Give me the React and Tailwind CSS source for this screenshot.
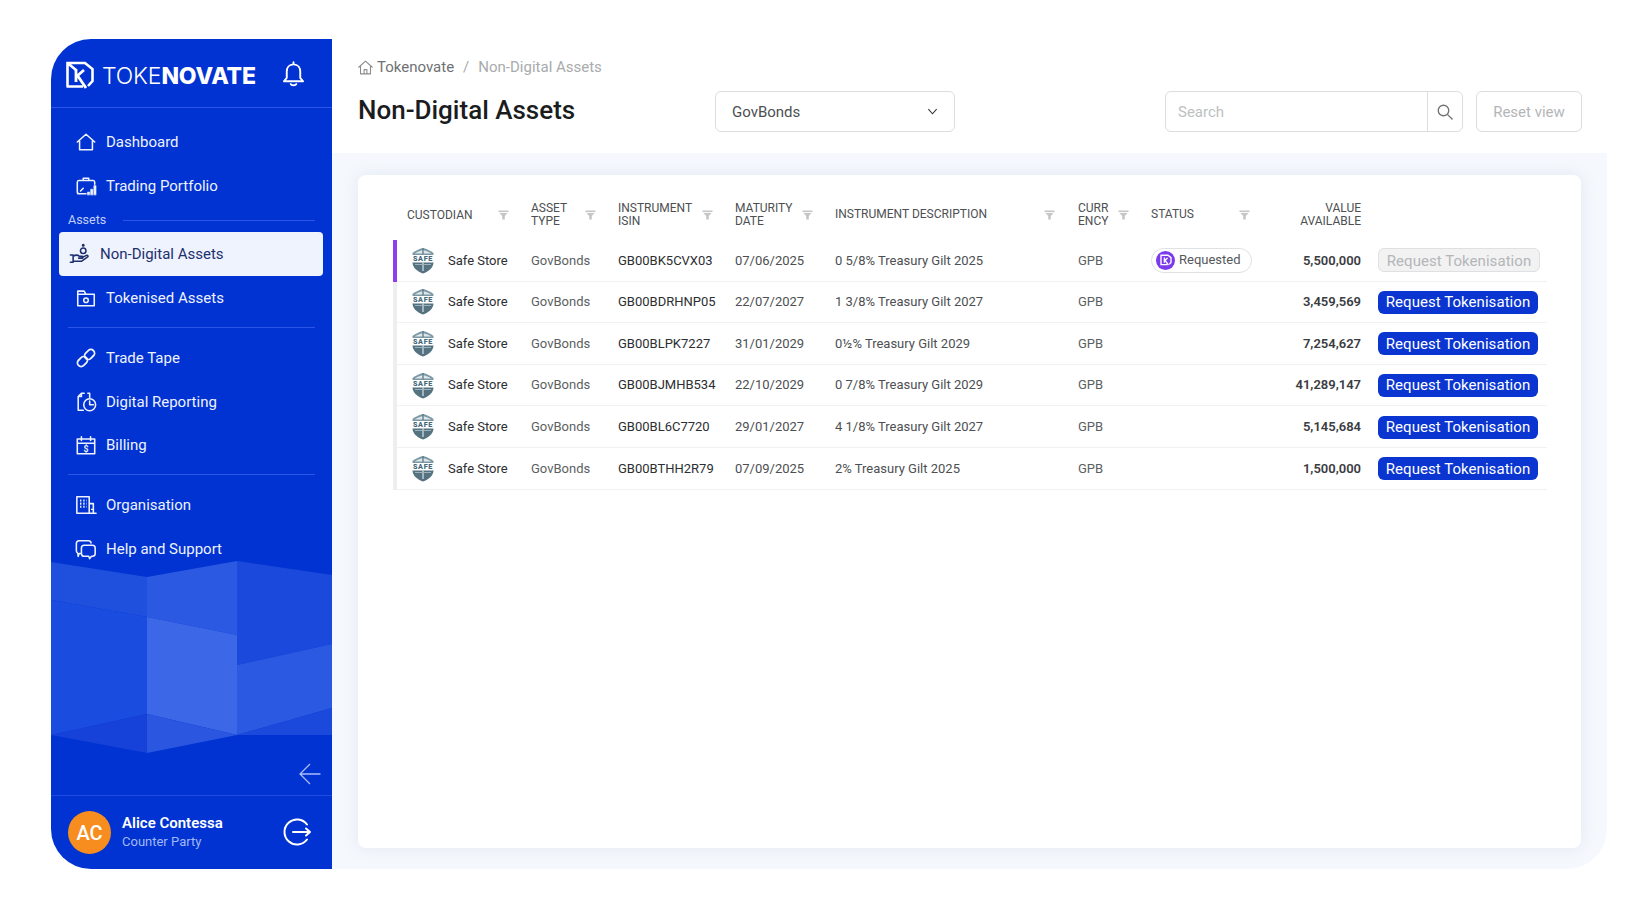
import React from "react";

const F = "font-['Roboto',sans-serif]";

function Ic({ children, className = "w-[22px] h-[22px] shrink-0", vb = "0 0 24 24", sw = 1.7 }) {
  return (
    <svg viewBox={vb} className={className} fill="none" stroke="currentColor" strokeWidth={sw} strokeLinecap="round" strokeLinejoin="round">
      {children}
    </svg>
  );
}

const icons = {
  home: <Ic><path d="M2.500 12 12 3.500l9.500 8.500M5 10.500V20.500h14V10.500" /></Ic>,
  portfolio: <Ic><path d="M9 6V3.500h6V6M5 20.500c-2 0-2.500-.5-2.500-2V8C2.500 7 3 6 4 6h16c1 0 1.500 1 1.500 2v2M3 20.500h9" /><path d="M13.500 21.500v-3h2.500v3zM17 21.500v-6h2.500v6zM20.500 21.500V11.500H23v10z" fill="currentColor" strokeWidth="0.5" /><path d="M6 17.500l3-3" /></Ic>,
  hand: <Ic><path d="M1.500 13h3v8h-3M4.500 14.500c3-2 5-1.500 7 0h3c1 0 1 2 0 2h-4M14 16l5-2.500c1.500-.5 2.500 1 1 2L13.500 20H4.500" /><circle cx="15.500" cy="8.500" r="3" /><circle cx="15.500" cy="2.500" r=".8" fill="currentColor" /></Ic>,
  folder: <Ic><path d="M3 20.500V4.500h7l2 3.500h9v12.500zM3 8h9" /><circle cx="12" cy="14.500" r="2.500" /></Ic>,
  link: <Ic sw={2}><g transform="rotate(-45 12 12)"><rect x="0.500" y="8" width="12" height="8" rx="4" /><rect x="11.500" y="8" width="12" height="8" rx="4" /></g></Ic>,
  report: <Ic><path d="M10 2.500H7L3.500 6v15H9M3.500 6H7V2.500M14 2.500h2V7" /><circle cx="16" cy="15" r="6.500" /><path d="M16 11v4h4" /></Ic>,
  billing: <Ic><path d="M2.500 5.500h19v16h-19zM2.500 10h19M7 3v4M17 3v4" /><text x="12" y="19.700" fontSize="9.500" textAnchor="middle" fill="currentColor" stroke="none" fontWeight="700" fontFamily="Roboto">$</text></Ic>,
  org: <Ic><path d="M2 21V3h13.500v18zM15.500 10.500H20V21h-4.500M2 21h21" /><path d="M5.500 7h1.500M9 7h1.500M12.500 7h.5M5.500 10.500h1.500M9 10.500h1.500M12.500 10.500h.5M5.500 14h1.500M9 14h1.500M12.500 14h.5M18.500 16v1.500" strokeWidth="2.200" strokeLinecap="butt" /></Ic>,
  help: <Ic><path d="M6 17H4.500l-1 3-.5-3.500C2 16 1.500 15 1.500 14V6c0-2 1-3 3-3h10c2 0 3 1 3 2.500" /><path d="M10 8h9c2 0 3 1 3 3v6c0 2-1 3-3 3h-1l-2 2.500-1-2.500h-5c-2 0-3-1-3-3v-6c0-2 1-3 3-3z" /></Ic>,
};

const Divider = ({ className }) => <div className={`h-px bg-[#2a55e6] ml-[17px] mr-[17px] ${className}`} />;

function NavItem({ icon, label }) {
  return (
    <div className="h-[44px] flex items-center pl-[25px] text-[#eef2ff] text-[15px]">
      <span className="w-[20px] h-[20px] mr-[10px] flex items-center justify-center">{icons[icon]}</span>
      <span>{label}</span>
    </div>
  );
}

function Sidebar() {
  return (
    <aside className="relative w-[281px] h-full bg-[#0033d1] rounded-l-[40px] flex flex-col overflow-hidden shrink-0">
      <svg className="absolute left-0 top-[522px] w-[281px] h-[192px]" viewBox="51 561 281 192" aria-hidden="true">
        <polygon points="51,562 147,577 147,617 51,600" fill="#1e4fdd" />
        <polygon points="51,600 147,617 147,714 51,735" fill="#1a4ddf" />
        <polygon points="51,735 147,714 147,753" fill="#1642d9" />
        <polygon points="147,577 237,561 237,635 147,617" fill="#2c59e1" />
        <polygon points="147,617 237,635 237,735 147,714" fill="#3c67e6" />
        <polygon points="147,714 237,735 147,753" fill="#2a56e0" />
        <polygon points="237,561 332,575 332,644 237,665" fill="#1a49db" />
        <polygon points="237,665 332,644 332,708 237,735" fill="#2c59e2" />
        <polygon points="237,735 332,708 332,735" fill="#1b49dc" />
      </svg>
      <div className="relative h-[69px] shrink-0 border-b border-[#2a55e6] flex items-center pl-[14px]">
        <svg viewBox="0 0 30 28" className="w-[30px] h-[28px] mt-[4px]" fill="none" stroke="white" strokeWidth="2.600">
          <path d="M2.500 1V25.500M1.500 25.500H18M1.500 2H20L27.500 8V20L23 25M2.500 2 11 9" />
          <path d="M11 8V21M11 16 19 9M12.500 14.500 21 27" strokeWidth="2.800" />
        </svg>
        <span className="ml-[7px] mt-[6px] text-[23px] leading-none tracking-[-0.15px] text-white font-['Inter',sans-serif] font-light">TOKE<span className="font-extrabold">NOVATE</span></span>
        <svg viewBox="0 0 24 24" className="absolute left-[229px] top-[21px] w-[27px] h-[29px] text-white" fill="none" stroke="currentColor" strokeWidth="1.700" strokeLinejoin="round" strokeLinecap="round">
          <path d="M12 3c-4 0-6 3-6 6.500V15l-2.500 3h17L18 15V9.500C18 6 16 3 12 3zM12 1v2M9.500 20.500c.5 1.500 4.500 1.500 5 0" />
        </svg>
      </div>
      <nav className="relative flex flex-col mt-[12px]">
        <NavItem icon="home" label="Dashboard" />
        <NavItem icon="portfolio" label="Trading Portfolio" />
        <div className="mt-[5px] h-[14px] flex items-center pl-[17px] text-[#c3d0fb] text-[12.500px]">
          <span className="mr-[17px]">Assets</span>
          <span className="flex-1 h-px bg-[#2a55e6] mr-[17px]" />
        </div>
        <div className="mt-[5px] ml-[8px] mr-[9px] h-[44px] rounded-[4px] bg-[#eef3fd] flex items-center pl-[11px] text-[#1d2f6f] text-[15px]">
          <span className="w-[20px] h-[20px] mr-[10px] flex items-center justify-center">{icons.hand}</span>
          <span>Non-Digital Assets</span>
        </div>
        <NavItem icon="folder" label="Tokenised Assets" />
        <Divider className="mt-[7px] mb-[8px]" />
        <NavItem icon="link" label="Trade Tape" />
        <NavItem icon="report" label="Digital Reporting" />
        <div className="-mt-px"><NavItem icon="billing" label="Billing" /></div>
        <Divider className="mt-[7px] mb-[8px]" />
        <NavItem icon="org" label="Organisation" />
        <NavItem icon="help" label="Help and Support" />
      </nav>
      <div className="relative mt-auto flex justify-end pr-[10px] pb-[9px] text-[#a9bcf7]">
        <svg viewBox="0 0 24 24" className="w-[24px] h-[24px]" fill="none" stroke="currentColor" strokeWidth="1.300"><path d="M22.500 12H2M12 2 2 12l10 10" /></svg>
      </div>
      <div className="relative h-[74px] border-t border-[#1f4be0] flex items-center pl-[17px] pr-[20px]">
        <div className="w-[43px] h-[43px] rounded-full bg-[#f78c1f] text-white text-[20px] flex items-center justify-center font-medium">AC</div>
        <div className="ml-[11px] -mt-[2px] flex flex-col">
          <span className="text-white text-[15px] leading-[19px] font-semibold">Alice Contessa</span>
          <span className="text-[#a3b8f5] text-[13px] leading-[17px]">Counter Party</span>
        </div>
        <svg viewBox="0 0 30 30" className="ml-auto -mt-[2px] w-[30px] h-[30px] text-white" fill="none" stroke="currentColor" strokeWidth="2" strokeLinecap="round" strokeLinejoin="round">
          <path d="M25 7.500A12.500 12.500 0 1 0 25 22.500M11 15h17M24 11.500l4 3.500-4 3.500" />
        </svg>
      </div>
    </aside>
  );
}

function Funnel() {
  return (
    <svg viewBox="0 0 10 10" className="w-[11px] h-[10px] shrink-0" fill="#c4c6c8">
      <rect x="0" y="0.500" width="10" height="1.600" />
      <polygon points="1,3 9,3 6.300,6 6.300,9.500 3.700,9.500 3.700,6" />
    </svg>
  );
}

function Shield() {
  return (
    <svg viewBox="0 0 24 27" className="w-[24px] h-[27px]">
      <path d="M1.500 6C5 3.500 8 2 12 1c4 1 7 2.500 10.500 5v2h-21z" fill="#7c98a4" />
      <path d="M3.500 6.500C6 5 9 3.800 12 3c3 .8 6 2 8.500 3.500z" fill="#dfe7ea" />
      <path d="M11.300 1h1.400v6h-1.400z" fill="#5f7f8c" />
      <path d="M1.500 15.500h21c0 5-5 9-10.500 11C6.500 24.500 1.500 20.500 1.500 15.500z" fill="#54727f" />
      <path d="M4 17h7v1H4zM13 17h7v1h-7z" fill="#9db3bc" />
      <path d="M11.300 15h1.400v9h-1.400z" fill="#c6d3d8" />
      <text x="12" y="13.700" textAnchor="middle" fontSize="7.200" fontWeight="900" letterSpacing=".7" fontFamily="Roboto" fill="#46697a">SAFE</text>
    </svg>
  );
}

const COLS = "grid grid-cols-[134px_87px_117px_100px_243px_73px_115px_95px_186px] w-[1150px]";

function Head({ children, width, right }) {
  return (
    <div className={`h-[37px] flex items-center ${right ? "justify-end text-right" : ""}`}>
      <div className={`leading-[13px] text-[12px] text-[#4d4f52] uppercase ${width}`}>{children}</div>
      {!right && <Funnel />}
    </div>
  );
}

const rows = [
  ["GB00BK5CVX03", "07/06/2025", "0 5/8% Treasury Gilt 2025", "5,500,000"],
  ["GB00BDRHNP05", "22/07/2027", "1 3/8% Treasury Gilt 2027", "3,459,569"],
  ["GB00BLPK7227", "31/01/2029", "0½% Treasury Gilt 2029", "7,254,627"],
  ["GB00BJMHB534", "22/10/2029", "0 7/8% Treasury Gilt 2029", "41,289,147"],
  ["GB00BL6C7720", "29/01/2027", "4 1/8% Treasury Gilt 2027", "5,145,684"],
  ["GB00BTHH2R79", "07/09/2025", "2% Treasury Gilt 2025", "1,500,000"],
];

function Row({ r, i }) {
  const first = i === 0;
  return (
    <div className={`${COLS} h-[41.600px] items-center border-b border-[#f0f1f2] relative text-[13px]`}>
      <div className={`absolute left-[-4px] top-0 bottom-[-1px] w-[4px] ${first ? "bg-[#8b3ff0]" : "bg-[#eeeeee]"}`} />
      <div className="flex items-center pl-[14px]">
        <Shield />
        <span className="ml-[13px] text-[#2c2e31]">Safe Store</span>
      </div>
      <div className="text-[#5c5f62]">GovBonds</div>
      <div className="text-[#2c2e31]">{r[0]}</div>
      <div className="text-[#4d4f52]">{r[1]}</div>
      <div className="text-[#4d4f52]">{r[2]}</div>
      <div className="text-[#5c5f62]">GPB</div>
      <div>
        {first && (
          <div className="w-[101px] h-[25px] rounded-full border border-[#e0e1e3] flex items-center pl-[4px] text-[#55585b]">
            <span className="w-[19px] h-[19px] rounded-full bg-[#7c3aed] flex items-center justify-center">
              <svg viewBox="0 0 30 28" className="w-[12px] h-[12px]" fill="none" stroke="white" strokeWidth="3.400">
                <path d="M2.500 1V25.500H18M1.500 2H20L27.500 8V20L23 25" />
                <path d="M11 8V21M11 16 19 9M12.500 14.500 21 27" />
              </svg>
            </span>
            <span className="ml-[4px] -mt-px">Requested</span>
          </div>
        )}
      </div>
      <div className="text-right font-semibold text-[#3a3c3f]">{r[3]}</div>
      <div className="pl-[17px]">
        {first ? (
          <div className="w-[162px] h-[24px] pt-[2px] rounded-[6px] border border-[#dfe0e1] bg-[#f2f2f3] text-[#b4b6b8] text-[15px] flex items-center justify-center tracking-[0.05px]">Request Tokenisation</div>
        ) : (
          <div className="w-[160px] h-[23px] mt-[1px] rounded-[6px] bg-[#0a35d0] text-white text-[15px] flex items-center justify-center tracking-[0.05px]">Request Tokenisation</div>
        )}
      </div>
    </div>
  );
}

function Main() {
  return (
    <main className="flex-1 flex flex-col min-w-0">
      <header className="h-[114px] shrink-0 pl-[26px] pr-[25px]">
        <div className="pt-[18px] h-[52px] flex items-start text-[15px] leading-[20px]">
          <svg viewBox="0 0 24 24" className="w-[17px] h-[17px] mt-[2px] -ml-px text-[#8a8c8e]" fill="none" stroke="currentColor" strokeWidth="1.500" strokeLinejoin="round"><path d="M2 12 12 3l10 9M5 10v11h14V10M10 21v-6h4v6" /></svg>
          <span className="ml-[3px] text-[#6f7173]">Tokenovate</span>
          <span className="ml-[9px] text-[#a9abad]">/</span>
          <span className="ml-[9px] text-[#a9abad]">Non-Digital Assets</span>
        </div>
        <div className="flex items-center">
          <h1 className="w-[357px] text-[26px] leading-[40px] font-medium text-[#1b1c1e] -mt-[4px]">Non-Digital Assets</h1>
          <div className="w-[240px] h-[41px] rounded-[6px] border border-[#dcdde0] flex items-center pl-[16px] pr-[16px] text-[15px] text-[#4d4f52]">
            <span className="mt-px">GovBonds</span>
            <svg viewBox="0 0 12 12" className="ml-auto w-[11px] h-[11px]" fill="none" stroke="#333" strokeWidth="1.200"><path d="M1.500 3.500 6 8.500l4.500-5" /></svg>
          </div>
          <div className="ml-auto w-[298px] h-[41px] rounded-[6px] border border-[#dcdde0] flex items-center">
            <span className="flex-1 mt-px pl-[12px] text-[15px] text-[#bdbfc1]">Search</span>
            <span className="w-[35px] h-full border-l border-[#dcdde0] flex items-center justify-center text-[#707274]">
              <svg viewBox="0 0 24 24" className="w-[18px] h-[18px]" fill="none" stroke="currentColor" strokeWidth="1.800"><circle cx="10" cy="10" r="7" /><path d="m15.500 15.500 6.500 6.500" /></svg>
            </span>
          </div>
          <div className="ml-[13px] w-[106px] h-[41px] pt-px rounded-[6px] border border-[#dcdde0] flex items-center justify-center text-[15px] text-[#b4b6b8]">Reset view</div>
        </div>
      </header>
      <section className="flex-1 bg-[#f5f8fd] rounded-br-[40px] pl-[26px] pr-[26px] pt-[22px] pb-[21px] min-h-0">
        <div className="h-full bg-white rounded-[8px] shadow-[0_0_16px_rgba(170,180,200,0.22)] pl-[39px] pt-[21px]">
          <div className={`${COLS} h-[44px] items-start`}>
            <div className="flex items-center h-[37px] pl-[10px]"><div className="w-[91px] text-[12px] text-[#4d4f52] uppercase">Custodian</div><Funnel /></div>
            <Head width="w-[54px]">Asset<br />Type</Head>
            <Head width="w-[84px]">Instrument<br />ISIN</Head>
            <Head width="w-[67px]">Maturity<br />Date</Head>
            <Head width="w-[209px]">Instrument Description</Head>
            <Head width="w-[40px]">Curr<br />ency</Head>
            <Head width="w-[88px]">Status</Head>
            <Head right width="">Value<br />Available</Head>
          </div>
          {rows.map((r, i) => <Row key={r[0]} r={r} i={i} />)}
        </div>
      </section>
    </main>
  );
}

export default function App() {
  return (
    <div className={`w-[1637px] h-[923px] bg-white pl-[51px] pt-[39px] overflow-hidden ${F}`}>
      <div className="w-[1556px] h-[830px] flex">
        <Sidebar />
        <Main />
      </div>
    </div>
  );
}
